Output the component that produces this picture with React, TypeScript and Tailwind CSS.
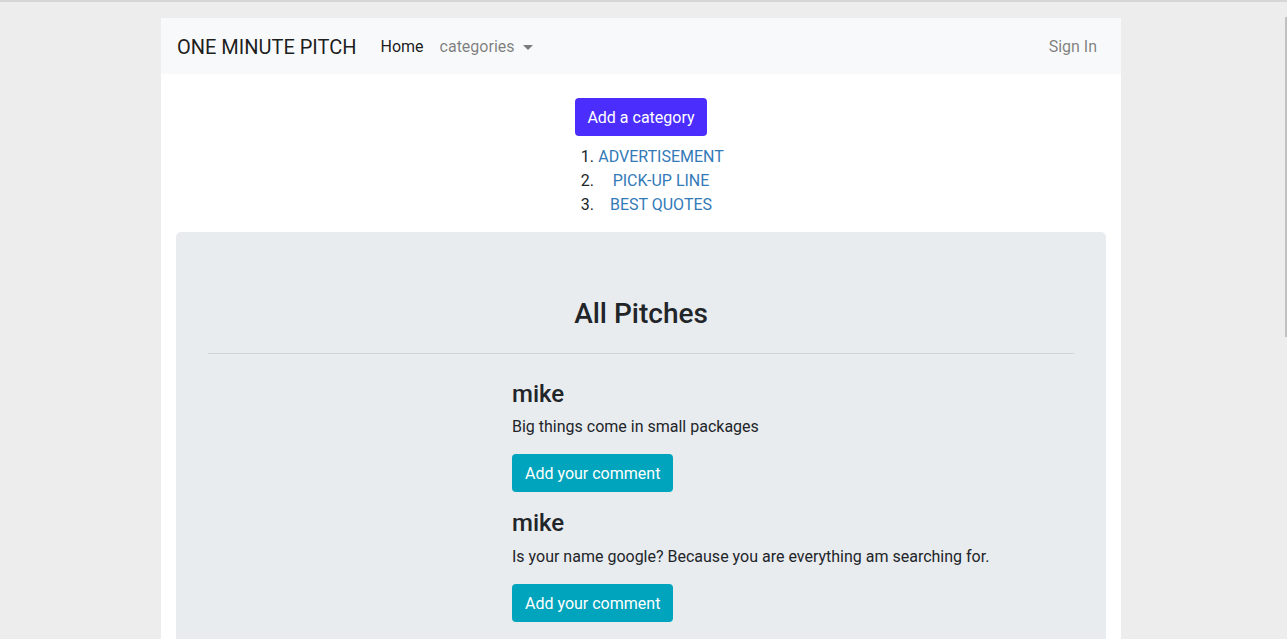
export default function App() {
    const pitches = [
        { author: "mike", body: "Big things come in small packages" },
        { author: "mike", body: "Is your name google? Because you are everything am searching for." },
    ];

    return (
        <div className="min-h-screen bg-[#ededed] border-t-2 border-[#d6d6d6] pr-[5px] pt-4 font-['Roboto',sans-serif] text-[#212529]">
            {/* scrollbar thumb */}
            <div className="fixed right-0 top-[17px] h-[320px] w-[2px] bg-[#c1c1c1]" />

            <div className="mx-auto w-[960px] bg-white">
                {/* navbar */}
                <nav className="flex h-[56px] items-center bg-[#f8f9fa] px-4 pt-px">
                    <span className="mr-4 text-[20px] text-black/90">ONE MINUTE PITCH</span>
                    <ul className="flex items-center">
                        <li className="px-2 text-black/90">Home</li>
                        <li className="flex items-center px-2 text-black/50">
                            categories
                            <span className="ml-[8px] mt-[1px] h-0 w-0 border-x-[5px] border-t-[5px] border-x-transparent border-t-black/50" />
                        </li>
                    </ul>
                    <span className="ml-auto px-2 text-black/50">Sign In</span>
                </nav>

                {/* categories */}
                <div className="flex flex-col items-center pt-6">
                    <button className="h-[38px] rounded-[4px] bg-[#4b2dfd] px-3 pt-px text-white">Add a category</button>
                    <ol className="ml-[40px] mt-2 w-[126px] list-decimal pt-px leading-6">
                        <li className="text-center"><span className="text-[#337ab7]">ADVERTISEMENT</span></li>
                        <li className="text-center"><span className="text-[#337ab7]">PICK-UP LINE</span></li>
                        <li className="text-center"><span className="text-[#337ab7]">BEST QUOTES</span></li>
                    </ol>
                </div>

                {/* all pitches */}
                <div className="mx-[15px] mt-[15px] rounded-[5px] bg-[#e9ecef] px-8 pt-[65px] pb-8">
                    <h3 className="text-center text-[28px] font-medium leading-[1.2]">All Pitches</h3>
                    <hr className="mt-[22px] mb-4 border-t border-black/10" />
                    <div className="ml-[304px] pt-2">
                        {pitches.map((p, i) => (
                            <div key={i} className="mb-[15px]">
                                <h4 className="mb-[7px] pt-[2px] text-[24px] font-medium leading-[1.2]">{p.author}</h4>
                                <p className="mb-[15px] leading-6">{p.body}</p>
                                <button className="h-[38px] rounded-[4px] bg-[#00a5bd] px-[13px] pt-px text-white">Add your comment</button>
                            </div>
                        ))}
                    </div>
                </div>
            </div>
        </div>
    );
}
